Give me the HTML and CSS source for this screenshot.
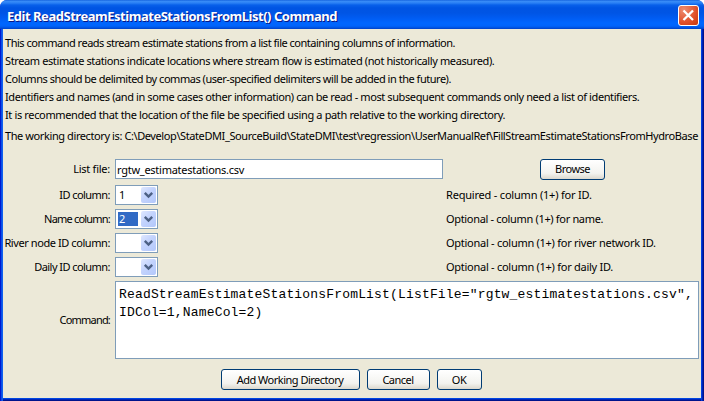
FILE: index.html
```html
<!DOCTYPE html>
<html lang="en">
<head>
<meta charset="utf-8">
<title>Edit ReadStreamEstimateStationsFromList() Command</title>
<link rel="stylesheet" href="styles.css">
</head>
<body>
<div class="window">
  <header class="titlebar">
    <h1 class="title">Edit ReadStreamEstimateStationsFromList() Command</h1>
    <button class="close" aria-label="Close"><svg width="21" height="21" viewBox="0 0 21 21"><path d="M5.5 5.5 15 15M15 5.5 5.5 15" stroke="#fff" stroke-width="2.3"/></svg></button>
  </header>
  <main class="content">
    <div class="notes">
      <p><span class="n1">This command reads stream estimate stations from a list file containing columns of information.</span></p>
      <p><span class="n2">Stream estimate stations indicate locations where stream flow is estimated (not historically measured).</span></p>
      <p><span class="n3">Columns should be delimited by commas (user-specified delimiters will be added in the future).</span></p>
      <p><span class="n4">Identifiers and names (and in some cases other information) can be read - most subsequent commands only need a list of identifiers.</span></p>
      <p><span class="n5">It is recommended that the location of the file be specified using a path relative to the working directory.</span></p>
      <p class="dir"><span class="n6">The working directory is: C:\Develop\StateDMI_SourceBuild\StateDMI\test\regression\UserManualRef\FillStreamEstimateStationsFromHydroBase</span></p>
    </div>
    <div class="form">
      <div class="row">
        <label class="label loose">List file:</label>
        <div class="field text"><span class="file">rgtw_estimatestations.csv</span></div>
        <button class="btn browse">Browse</button>
      </div>
      <div class="row">
        <label class="label">ID column:</label>
        <div class="field combo"><span class="value">1</span><span class="arrow"><svg width="15" height="16" viewBox="0 0 15 16"><path d="M3.8 5.8 7.5 9.5 11.2 5.8" fill="none" stroke="#4d6185" stroke-width="2.4"/></svg></span></div>
        <span class="hint h1">Required - column (1+) for ID.</span>
      </div>
      <div class="row">
        <label class="label tight">Name column:</label>
        <div class="field combo"><span class="value selected">2</span><span class="arrow"><svg width="15" height="16" viewBox="0 0 15 16"><path d="M3.8 5.8 7.5 9.5 11.2 5.8" fill="none" stroke="#4d6185" stroke-width="2.4"/></svg></span></div>
        <span class="hint h2">Optional - column (1+) for name.</span>
      </div>
      <div class="row">
        <label class="label river">River node ID column:</label>
        <div class="field combo"><span class="value"></span><span class="arrow"><svg width="15" height="16" viewBox="0 0 15 16"><path d="M3.8 5.8 7.5 9.5 11.2 5.8" fill="none" stroke="#4d6185" stroke-width="2.4"/></svg></span></div>
        <span class="hint">Optional - column (1+) for river network ID.</span>
      </div>
      <div class="row">
        <label class="label">Daily ID column:</label>
        <div class="field combo"><span class="value"></span><span class="arrow"><svg width="15" height="16" viewBox="0 0 15 16"><path d="M3.8 5.8 7.5 9.5 11.2 5.8" fill="none" stroke="#4d6185" stroke-width="2.4"/></svg></span></div>
        <span class="hint">Optional - column (1+) for daily ID.</span>
      </div>
      <div class="row tall">
        <label class="label tight">Command:</label>
        <div class="field area">ReadStreamEstimateStationsFromList(ListFile="rgtw_estimatestations.csv",<br>IDCol=1,NameCol=2)</div>
      </div>
    </div>
    <footer class="actions">
      <button class="btn add">Add Working Directory</button>
      <button class="btn cancel">Cancel</button>
      <button class="btn ok">OK</button>
    </footer>
  </main>
</div>
</body>
</html>
```
FILE: styles.css
```css
* { box-sizing: border-box; }
body {
  margin: 0;
  background: #fff;
  font: 11px/18px "Noto Sans", sans-serif;
  color: #000;
}
.window {
  width: 704px;
  height: 401px;
  overflow: hidden;
  display: flex;
  flex-direction: column;
  border-radius: 7px 7px 0 0;
  background: linear-gradient(90deg, #0019cf 0 1px, #0a4ee8 1px 2px, #1060ee 2px 3px, #0046e0 3px 701px, #0040e0 701px 702px, #0022b8 702px 703px, #00138c 703px);
}
.titlebar {
  flex: none;
  height: 29px;
  display: flex;
  justify-content: space-between;
  padding: 5px 5px 0 7px;
  background: linear-gradient(#0a57d8 0, #3b8ef7 1px, #2a80f5 3px, #0860ea 5px, #0054e3 8px, #0055e5 13px, #005cf2 18px, #0066ff 23px, #0064fb 26px, #0050dc 28px, #003fc4 29px);
}
.title {
  margin: 0;
  font: bold 13px/22px "Noto Sans", sans-serif;
  letter-spacing: -0.47px;
  color: #fff;
  text-shadow: 1px 1px 0 #0a1883;
  white-space: nowrap;
}
.close {
  width: 21px;
  height: 21px;
  padding: 0;
  border: 1px solid #fff;
  border-radius: 3px;
  background: radial-gradient(circle at 25% 20%, #ee8c70, #e0502a 60%, #c8380c);
}
.close svg { display: block; margin: -1px; }
.content {
  flex: none;
  width: 698px;
  height: 369px;
  margin-left: 3px;
  background: #ece9d8;
  box-shadow: 0 1px #0046e0, 0 2px #0024b8, 0 3px #00138c;
}
.notes { padding: 5px 0 0 2px; white-space: nowrap; }
.notes p { margin: 0; height: 18px; }
.notes .dir { margin-top: 3px; }
.n1 { letter-spacing: -0.49px; }
.n2 { letter-spacing: -0.385px; }
.n3 { letter-spacing: -0.475px; }
.n4 { letter-spacing: -0.4px; }
.n5 { letter-spacing: -0.36px; }
.n6 { letter-spacing: -0.405px; }
.form {
  display: flex;
  flex-direction: column;
  gap: 4px;
  padding-top: 14px;
}
.row { height: 20px; display: flex; align-items: center; white-space: nowrap; }
.row:first-child { margin-bottom: 2px; }
.label { width: 107px; margin-right: 5px; text-align: right; letter-spacing: -0.55px; }
.label.tight { letter-spacing: -0.8px; }
.label.loose { letter-spacing: -0.25px; }
.label.river { letter-spacing: -0.42px; }
.field { border: 1px solid #7f9db9; background: #fff; }
.text { width: 328px; height: 20px; padding-left: 1px; line-height: 19px; }
.file { letter-spacing: -0.26px; }
.browse { width: 65px; margin-left: 97px; }
.combo { width: 43px; height: 20px; display: flex; align-items: center; padding: 0 1px 0 2px; }
.value { width: 20px; height: 14px; margin-right: 3px; padding-left: 1px; line-height: 14px; }
.selected { background: #316ac5; color: #fff; }
.arrow {
  width: 15px;
  height: 16px;
  border-radius: 2px;
  background: linear-gradient(135deg, #dfe8ff, #c3d3fd 45%, #b3c8fb);
}
.arrow svg { display: block; }
.hint { margin-left: 288px; letter-spacing: -0.27px; }
.h1 { letter-spacing: -0.2px; }
.h2 { letter-spacing: -0.33px; }
.tall { height: 78px; }
.area {
  width: 584px;
  height: 78px;
  padding: 4px 0 0 3px;
  font: 13px/18px "Liberation Mono", monospace;
  letter-spacing: 0.17px;
}
.actions { display: flex; justify-content: center; gap: 7px; padding: 10px 2px 0 0; }
.btn {
  height: 21px;
  padding: 0;
  border: 1px solid #003c74;
  border-radius: 3px;
  background: linear-gradient(#fff, #f3f3ef 70%, #dcd8cd);
  font: 11px/18px "Noto Sans", sans-serif;
  letter-spacing: -0.5px;
  color: #000;
  white-space: nowrap;
}
.add { width: 139px; }
.cancel { width: 63px; }
.ok { width: 45px; }
```
